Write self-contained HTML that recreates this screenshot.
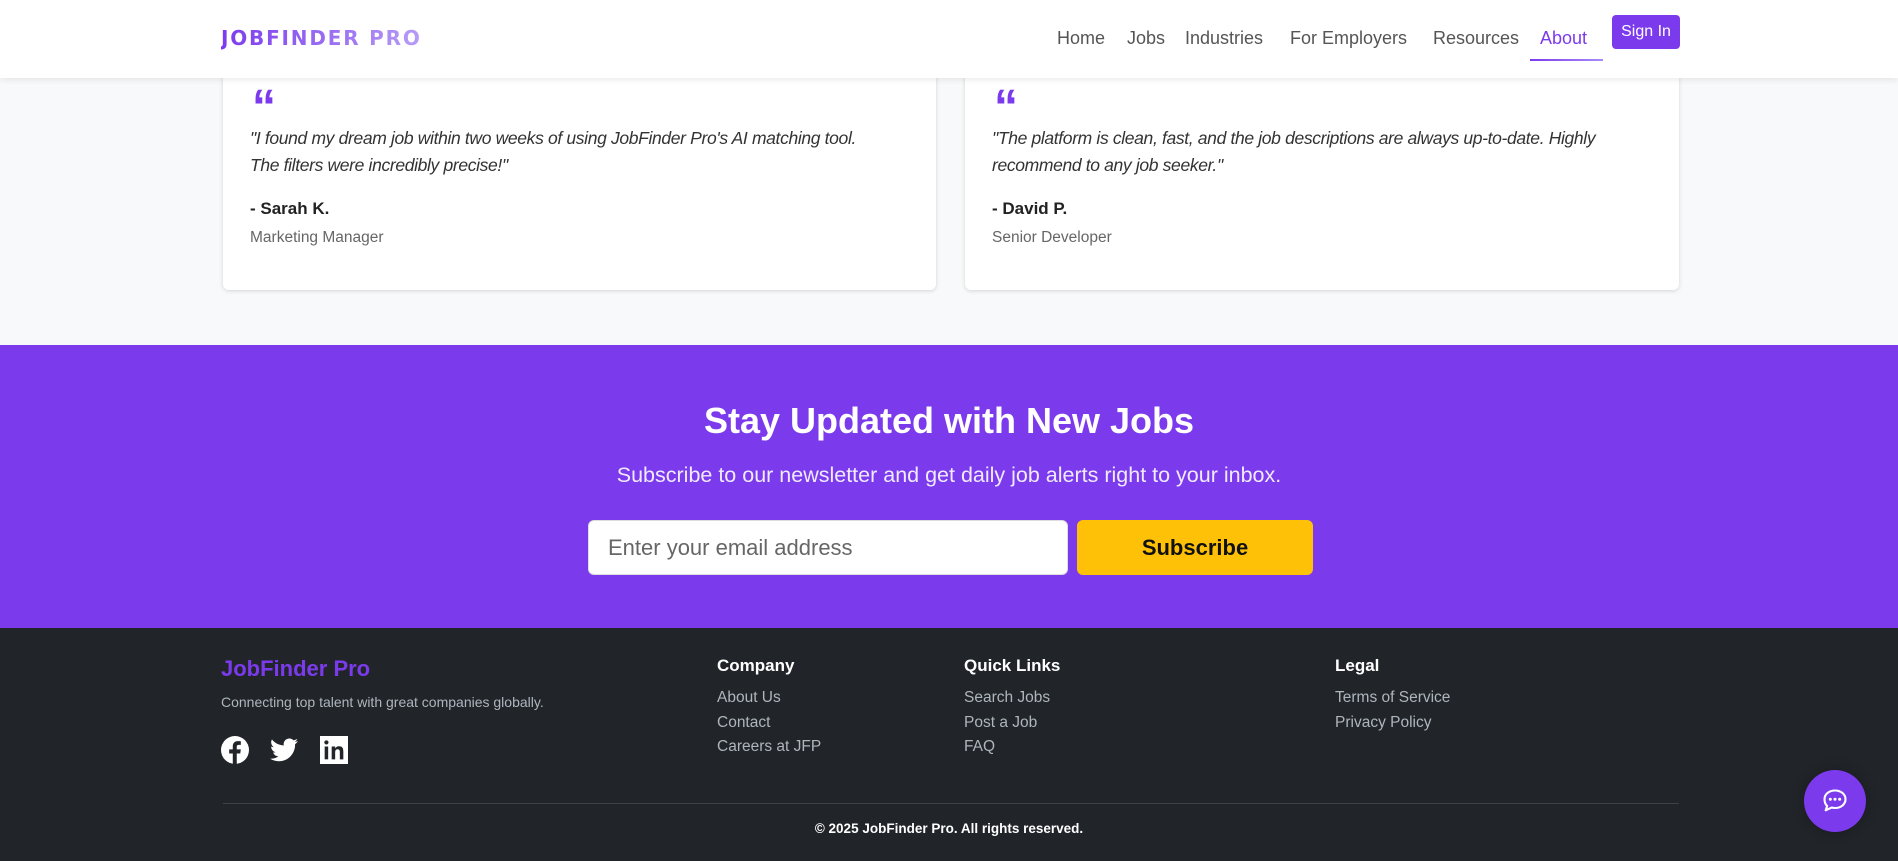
<!DOCTYPE html>
<html><head><meta charset="utf-8"><style>
*{box-sizing:border-box;margin:0;padding:0}
body{width:1898px;height:861px;overflow:hidden;font-family:"Liberation Sans",sans-serif;background:#f8f9fa;position:relative}
.nav{position:absolute;left:0;top:0;width:1898px;height:78px;background:#fff;box-shadow:0 2px 6px rgba(0,0,0,.08);z-index:5}
.logo{position:absolute;left:221px;top:26px;font-family:"DejaVu Sans",sans-serif;font-size:20px;font-weight:bold;letter-spacing:1.8px;background:linear-gradient(90deg,#7c3aed,#b69cf7);-webkit-background-clip:text;color:transparent}
.nav a{position:absolute;top:28px;font-size:18px;color:#555;text-decoration:none}
.about{color:#7c3aed!important}
.ul{position:absolute;left:1530px;top:59px;width:73px;height:2px;background:linear-gradient(90deg,#7c3aed,#a78bfa)}
.sign{position:absolute;left:1612px;top:15px;width:68px;height:34px;background:#7c3aed;border-radius:4px;color:#fff;font-size:16px;text-align:center;line-height:34px}
.card{position:absolute;top:40px;height:250px;background:#fff;border-radius:6px;box-shadow:0 1px 4px rgba(0,0,0,.15)}
.q{position:absolute;left:29px;top:44px;font-size:48px;font-weight:bold;color:#7c3aed;line-height:1}
.qt{position:absolute;left:27px;top:85px;font-size:17.5px;font-style:italic;color:#333;line-height:27px;width:670px;letter-spacing:-0.35px}
.nm{position:absolute;left:27px;top:159px;font-size:17px;font-weight:bold;color:#222}
.rl{position:absolute;left:27px;top:189px;font-size:15.5px;color:#666}
.news{position:absolute;left:0;top:345px;width:1898px;height:283px;background:#7c3aed;text-align:center;color:#fff}
.news h2{position:absolute;width:100%;top:55px;font-size:36px;font-weight:bold}
.news p{position:absolute;width:100%;top:118px;font-size:21.5px;font-weight:300;color:#f0eaff}
.inp{position:absolute;left:588px;top:175px;width:480px;height:55px;background:#fff;border-radius:6px;border:1px solid #ddd;font-size:22px;color:#666;text-align:left;padding-left:19px;line-height:53px}
.btn{position:absolute;left:1077px;top:175px;width:236px;height:55px;background:#ffc107;border-radius:6px;color:#111;font-weight:bold;font-size:22px;line-height:55px}
.foot{position:absolute;left:0;top:628px;width:1898px;height:233px;background:#212529;color:#adb5bd}
.brand{position:absolute;left:221px;top:28px;font-size:22px;font-weight:bold;color:#7c3aed}
.tag{position:absolute;left:221px;top:66px;font-size:14px}
.col{position:absolute;top:28px}
.col h4{color:#fff;font-size:17px;margin-bottom:10px}
.col div{font-size:15.5px;line-height:24.5px}
.hr{position:absolute;left:223px;top:175px;width:1456px;height:1px;background:#3d4247}
.copy{position:absolute;width:100%;top:193px;text-align:center;color:#fff;font-size:13.5px;font-weight:bold}
.chat{position:absolute;left:1804px;top:770px;width:62px;height:62px;border-radius:50%;background:#7c3aed;box-shadow:0 0 12px rgba(0,0,0,.3)}
</style></head><body>
<div class="nav">
<div class="logo">JOBFINDER PRO</div>
<a style="left:1057px">Home</a><a style="left:1127px">Jobs</a><a style="left:1185px">Industries</a><a style="left:1290px">For Employers</a><a style="left:1433px">Resources</a><a class="about" style="left:1540px">About</a>
<div class="ul"></div>
<div class="sign">Sign In</div>
</div>
<div class="card" style="left:223px;width:713px">
<div class="q">“</div>
<div class="qt" style="width:620px">"I found my dream job within two weeks of using JobFinder Pro's AI matching tool.<br>The filters were incredibly precise!"</div>
<div class="nm">- Sarah K.</div><div class="rl">Marketing Manager</div></div>
<div class="card" style="left:965px;width:714px">
<div class="q">“</div>
<div class="qt">"The platform is clean, fast, and the job descriptions are always up-to-date. Highly recommend to any job seeker."</div>
<div class="nm">- David P.</div><div class="rl">Senior Developer</div></div>
<div class="news">
<h2>Stay Updated with New Jobs</h2>
<p>Subscribe to our newsletter and get daily job alerts right to your inbox.</p>
<div class="inp">Enter your email address</div>
<div class="btn">Subscribe</div>
</div>
<div class="foot">
<div class="brand">JobFinder Pro</div>
<div class="tag">Connecting top talent with great companies globally.</div>
<svg style="position:absolute;left:221px;top:108px" width="28" height="28" viewBox="0 0 24 24"><circle cx="12" cy="12" r="12" fill="#fff"/><path d="M13.5 24V15h3l.5-3.5h-3.5V9.3c0-1 .3-1.7 1.8-1.7H17V4.5c-.3 0-1.4-.1-2.6-.1-2.6 0-4.3 1.6-4.3 4.4v2.7H7V15h3.1v9z" fill="#212529"/></svg>
<svg style="position:absolute;left:270px;top:110px" width="28" height="24" viewBox="0 0 24 20"><path d="M24 2.4c-.9.4-1.8.6-2.8.8 1-.6 1.8-1.6 2.2-2.7-1 .6-2 1-3.1 1.2C19.3.7 18 .1 16.6.1c-2.7 0-4.9 2.2-4.9 4.9 0 .4 0 .8.1 1.1C7.7 5.9 4.1 4 1.7 1 1.2 1.7 1 2.6 1 3.5c0 1.7.9 3.2 2.2 4.1-.8 0-1.6-.2-2.2-.6v.1c0 2.4 1.7 4.4 3.9 4.8-.4.1-.8.2-1.3.2-.3 0-.6 0-.9-.1.6 2 2.4 3.4 4.6 3.4-1.7 1.3-3.8 2.1-6.1 2.1-.4 0-.8 0-1.2-.1 2.2 1.4 4.8 2.2 7.5 2.2 9.1 0 14-7.5 14-14v-.6c1-.7 1.8-1.6 2.5-2.6z" fill="#fff"/></svg>
<svg style="position:absolute;left:320px;top:108px" width="28" height="28" viewBox="0 0 24 24"><rect width="24" height="24" fill="#fff"/><rect x="4" y="9" width="3" height="11" fill="#212529"/><circle cx="5.5" cy="5.5" r="1.8" fill="#212529"/><path d="M10 9h3v1.6c.5-.9 1.6-1.8 3.3-1.8 3.3 0 3.7 2.1 3.7 4.9V20h-3v-5.6c0-1.4 0-3-1.8-3s-2.2 1.4-2.2 2.9V20h-3z" fill="#212529"/></svg>
<div class="col" style="left:717px"><h4>Company</h4><div>About Us</div><div>Contact</div><div>Careers at JFP</div></div>
<div class="col" style="left:964px"><h4>Quick Links</h4><div>Search Jobs</div><div>Post a Job</div><div>FAQ</div></div>
<div class="col" style="left:1335px"><h4>Legal</h4><div>Terms of Service</div><div>Privacy Policy</div></div>
<div class="hr"></div>
<div class="copy">© 2025 JobFinder Pro. All rights reserved.</div>
</div>
<div class="chat"><svg style="position:absolute;left:17px;top:17px" width="28" height="28" viewBox="0 0 24 24"><path d="M12 3c5 0 9 3.2 9 7.5S17 18 12 18c-1 0-2-.1-2.9-.4L4 20l1.3-3.7C3.8 14.9 3 12.8 3 10.5 3 6.2 7 3 12 3z" fill="none" stroke="#fff" stroke-width="1.8" stroke-linejoin="round"/><circle cx="8" cy="10.5" r="1.3" fill="#fff"/><circle cx="12" cy="10.5" r="1.3" fill="#fff"/><circle cx="16" cy="10.5" r="1.3" fill="#fff"/></svg></div>
</body></html>
